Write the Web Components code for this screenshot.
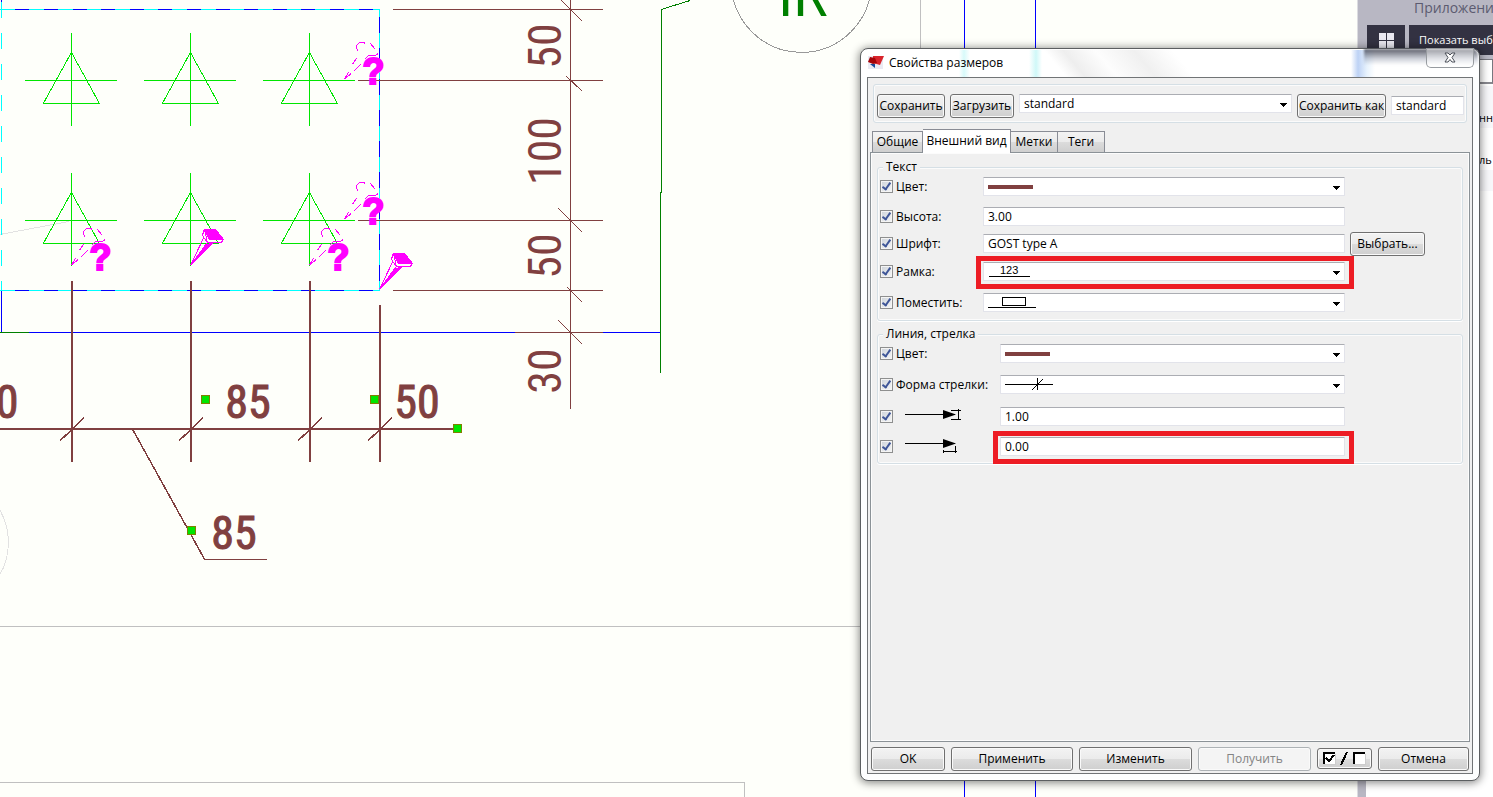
<!DOCTYPE html>
<html lang="ru">
<head>
<meta charset="utf-8">
<title>Свойства размеров</title>
<style>
html, body { height: 100%; margin: 0; }
body { font: 12px/16px "Open Sans", "Noto Sans", sans-serif; color: #000; overflow: hidden; }
</style>
</head>
<body>
<desktop-view>
  <cad-drawing></cad-drawing>
  <side-panel slot="side"></side-panel>
  <dialog-window slot="window" heading="Свойства размеров">
    <settings-bar></settings-bar>
    <tab-sheet>
      <group-box heading="Текст" class="text">
        <prop-row label="Цвет:"><pick-list name="Цвет текста"><svg width="45" height="4"><rect width="45" height="4" fill="#804040"/></svg></pick-list></prop-row>
        <prop-row label="Высота:"><text-field name="Высота" value="3.00"></text-field></prop-row>
        <prop-row label="Шрифт:"><text-field name="Шрифт" value="GOST type A"></text-field><push-button slot="extra">Выбрать...</push-button></prop-row>
        <prop-row label="Рамка:" marked><pick-list name="Рамка"><svg width="44" height="13"><text x="12" y="9" font-size="11" font-family="Liberation Sans">123</text><path d="M1 11.500h41" stroke="#000" shape-rendering="crispEdges"/></svg></pick-list></prop-row>
        <prop-row label="Поместить:"><pick-list name="Поместить"><svg width="50" height="13"><path d="M0 11.500h48M14.500 1.500h23v8h-23z" fill="none" stroke="#000" shape-rendering="crispEdges"/></svg></pick-list></prop-row>
      </group-box>
      <group-box heading="Линия, стрелка" class="line">
        <prop-row label="Цвет:"><pick-list name="Цвет линии"><svg width="45" height="4"><rect width="45" height="4" fill="#804040"/></svg></pick-list></prop-row>
        <prop-row label="Форма стрелки:"><pick-list name="Форма стрелки"><svg width="50" height="13"><path d="M0 6.500h48M32.500 0v12M27 12L38 1" fill="none" stroke="#000" shape-rendering="crispEdges"/></svg></pick-list></prop-row>
        <prop-row name="Высота стрелки"><svg slot="icon" width="60" height="14"><path d="M0 6.500h50M46 2.500h10M46 11.500h10M53.500 1v11" fill="none" stroke="#000" shape-rendering="crispEdges"/><path d="M38 2l13 4.500l-13 4.500z"/></svg><text-field name="Высота стрелки" value="1.00"></text-field></prop-row>
        <prop-row name="Длина стрелки" marked><svg slot="icon" width="60" height="18"><path d="M0 5.500h50M38 13.500h14M38.500 12v3M50.500 8v7" fill="none" stroke="#000" shape-rendering="crispEdges"/><path d="M38 1l13 4.500l-13 4.500z"/></svg><text-field name="Длина стрелки" value="0.00"></text-field></prop-row>
      </group-box>
    </tab-sheet>
    <action-bar></action-bar>
  </dialog-window>
</desktop-view>

<script>
function define(name, html, setup) {
  const template = document.createElement('template');
  template.innerHTML = html;
  customElements.define(name, class extends HTMLElement {
    constructor() {
      super();
      this.attachShadow({ mode: 'open' }).append(template.content.cloneNode(true));
    }
    connectedCallback() { if (setup) setup(this, this.shadowRoot); }
  });
}

define('desktop-view', `
<style>
:host { display: grid; grid-template-columns: minmax(0, 1fr) 136px; height: 100vh; position: relative; overflow: hidden; background: #fefffa; }
::slotted(*) { min-width: 0; min-height: 0; }
</style>
<slot></slot><slot name="side"></slot><slot name="window"></slot>`);

define('push-button', `
<style>
:host { display: flex; height: 24px; }
:host([short]) { height: 21px; }
button { flex: 1; font: inherit; color: inherit; padding: 0; margin: 0; white-space: nowrap; border: 1px solid #707070; border-radius: 3px;
  background: linear-gradient(#f3f3f3, #ebebeb 50%, #dcdcdc 50%, #cfcfcf); box-shadow: inset 0 0 0 1px #fafafa; }
button:disabled { color: #838383; border-color: #adb2b5; background: #f4f4f4; }
</style>
<button type="button"><slot></slot></button>`, (host, root) => {
  const button = root.querySelector('button');
  button.disabled = host.hasAttribute('off');
  if (host.getAttribute('name')) button.setAttribute('aria-label', host.getAttribute('name'));
});

const fieldStyle = `font: inherit; color: inherit; box-sizing: border-box; width: 100%; height: 19px; margin: 0; padding: 0 4px; background: #fff;
  border: 1px solid #e2e3ea; border-top-color: #abadb3; border-radius: 1px; outline: 0;`;

define('text-field', `
<style>:host { display: block; } input { display: block; ${fieldStyle} }</style>
<input type="text">`, (host, root) => {
  const input = root.querySelector('input');
  input.value = host.getAttribute('value');
  input.setAttribute('aria-label', host.getAttribute('name'));
});

define('pick-list', `
<style>
:host { display: grid; align-items: center; }
select { appearance: none; ${fieldStyle} grid-area: 1 / 1; }
.face, .arrow { grid-area: 1 / 1; pointer-events: none; }
.face { padding-left: 5px; display: flex; }
.arrow { justify-self: end; margin: 2px 5px 0 0; }
</style>
<select><option></option></select>
<span class="face"><slot></slot></span>
<svg class="arrow" width="7" height="4" shape-rendering="crispEdges"><path d="M0 0h7v1h-7zM1 1h5v1h-5zM2 2h3v1h-3zM3 3h1v1h-1z"/></svg>`, (host, root) => {
  root.querySelector('select').setAttribute('aria-label', host.getAttribute('name'));
  root.querySelector('option').textContent = host.getAttribute('value') || '';
});

define('group-box', `
<style>
:host { display: block; }
fieldset { margin: 0; padding: 0 0 0 2px; border: 1px solid #d5dfe5; border-radius: 3px; box-shadow: inset 0 0 0 1px #fbfbfb, 0 1px #fff; min-width: 0; }
legend { margin-left: 3px; padding: 0 3px; height: 16px; background: #f0f0f0; }
.rows { display: grid; --label: 103px; margin-top: 2px; grid-template-rows: 30px 27px 28px 31px 27px; }
:host(.line) .rows { --label: 120px; grid-template-rows: 31px 32px 30px 26px; }
</style>
<fieldset><legend></legend><div class="rows"><slot></slot></div></fieldset>`, (host, root) => {
  root.querySelector('legend').textContent = host.getAttribute('heading');
});

define('prop-row', `
<style>
:host { display: grid; grid-template-columns: var(--label) minmax(0, 362fr) 117px; align-items: start; }
label { display: flex; gap: 3px; padding-top: 2px; align-items: start; line-height: 16px; white-space: nowrap; }
input { appearance: none; flex: none; box-sizing: border-box; width: 13px; height: 13px; margin: 1px 0 0; border: 1px solid #8e8f8f; background: linear-gradient(135deg, #cdd3da, #f6f6f6); box-shadow: inset 0 0 0 1px #f4f4f4; display: grid; }
input:checked::before { content: ""; width: 3px; height: 7px; border: solid #3f5698; border-width: 0 2px 2px 0; transform: rotate(35deg); margin: 0 3px; }
.control { position: relative; }
:host([marked]) .control::after { content: ""; position: absolute; inset: -6px -9px -8px -7px; border: 5px solid #ed1c24; pointer-events: none; }
.extra { display: flex; padding-left: 5px; margin-top: -2px; }
::slotted(push-button) { width: 75px; }
::slotted([slot=icon]) { margin: -1px 0 0 9px; }
</style>
<label><input type="checkbox" checked><span></span><slot name="icon"></slot></label>
<div class="control"><slot></slot></div>
<div class="extra"><slot name="extra"></slot></div>`, (host, root) => {
  const label = host.getAttribute('label');
  const span = root.querySelector('span');
  if (label) span.textContent = label;
  else { span.remove(); root.querySelector('input').setAttribute('aria-label', host.getAttribute('name')); }
});

define('settings-bar', `
<style>
:host { display: flex; align-items: start; gap: 5px; margin: 6px 5px 0; padding: 9px 2px 4px 3px; border: 1px solid #d5dfe5; border-radius: 3px; box-shadow: inset 0 0 0 1px #fbfbfb; }
.pick { flex: 1; } .save { width: 68px; } .load { width: 64px; } .as { width: 89px; } .name { width: 73px; margin-top: 2px; }
</style>
<push-button class="save">Сохранить</push-button>
<push-button class="load">Загрузить</push-button>
<pick-list class="pick" name="Набор свойств" value="standard"></pick-list>
<push-button class="as">Сохранить как</push-button>
<text-field class="name" name="Имя набора" value="standard"></text-field>`);

define('tab-sheet', `
<style>
:host { display: flex; flex-direction: column; flex: 1; min-height: 0; margin: 6px 2px 0; }
nav { display: flex; align-items: end; padding-left: 2px; height: 23px; }
button { font: inherit; color: inherit; height: 21px; padding: 0; border: 1px solid #898c95; border-left-width: 0; border-bottom: 0;
  background: linear-gradient(#f3f3f3, #ebebeb 50%, #dcdcdc 50%, #cfcfcf); white-space: nowrap; }
button:first-child { border-left-width: 1px; width: 51px; }
button[aria-selected=true] { height: 24px; width: 88px; margin-bottom: -1px; padding-bottom: 2px; background: #fff; z-index: 1; }
.c, .d { width: 47px; }
.sheet { flex: 1; display: flex; flex-direction: column; gap: 5px; padding: 6px 6px 0; border: 1px solid #8b9297; box-shadow: inset 0 0 0 1px #fcfcfc; }
</style>
<nav role="tablist"><button role="tab">Общие</button><button role="tab" aria-selected="true">Внешний вид</button><button role="tab" class="c">Метки</button><button role="tab" class="d">Теги</button></nav>
<div class="sheet"><slot></slot></div>`);

define('action-bar', `
<style>
:host { display: flex; align-items: start; gap: 6px; padding: 5px 3px 2px; }
.ok { flex: 74 1 0; } .wide { flex: 122 1 0; } .mid { flex: 113 1 0; } .tick { flex: 55 1 0; margin-top: 1px; } .cancel { flex: 91 1 0; }
svg { display: block; margin: auto; }
</style>
<push-button class="ok">OK</push-button>
<push-button class="wide">Применить</push-button>
<push-button class="mid">Изменить</push-button>
<push-button class="mid" off>Получить</push-button>
<push-button class="tick" short name="Включить или выключить все флажки"><svg width="43" height="15" fill="none" shape-rendering="crispEdges"><path fill="#fff" d="M1 2h11v11h-11zM31 2h11v11h-11z"/><path d="M1 13V2h11M31 13V2h11" stroke="#000" stroke-width="2"/><path d="M12.500 3v10.500H1M42.500 3v10.500H31" stroke="#ccc"/><path d="M3 7l3 3l5-6M18 14l6-13" stroke="#000" stroke-width="2"/></svg></push-button>
<push-button class="cancel">Отмена</push-button>`);

define('dialog-window', `
<style>
:host { position: absolute; top: 48px; right: 13px; bottom: 16px; width: 620px; box-sizing: border-box; display: flex; flex-direction: column; padding: 0 6px 6px;
  border: 1px solid #5c5f61; border-radius: 8px; box-shadow: inset 0 0 0 1px #fff, 0 1px 9px 1px #0007;
  background:
    linear-gradient(90deg, #0000 98px, #d7fafa 103px, #0000 109px) top / 100% 28px no-repeat,
    linear-gradient(90deg, #0000 168px, #cff8f8 175px, #0000 181px) top / 100% 28px no-repeat,
    linear-gradient(90deg, #0000 490px, #bdd2f5 497px, #e8f3fd 506px, #fff 514px) top / 100% 28px no-repeat,
    linear-gradient(50deg, #fff 32%, #eee 35%, #fdfdfd 40%, #f0f0f0 46%, #fff 52%) top / 100% 28px no-repeat, #fdfefe; }
header { display: flex; align-items: start; height: 28px; }
header svg.logo { margin: 6px 5px 0 1px; }
h1 { flex: 1; margin: 6px 0 0; font: inherit; line-height: 16px; }
header::after { content: ""; position: absolute; top: 0; right: 1px; width: 114px; height: 16px; border-radius: 0 6px 0 0; background: linear-gradient(#353846cc, #6b759055 60%, #fff0); filter: blur(1px); z-index: 0; }
button { z-index: 1; width: 48px; height: 20px; margin: -1px -1px 0 0; padding: 0; display: grid; place-items: center; background: #fff6; border: 1px solid #979ba0; border-top: 0; border-radius: 0 0 5px 5px; }
main { flex: 1; min-height: 0; display: flex; flex-direction: column; border: 1px solid #717476; background: #f0f0f0; }
</style>
<header>
  <svg class="logo" width="16" height="15"><rect width="15" height="13" y="1" fill="#eaeaf3"/><path d="M5 1h11l-4 9-7-2z" fill="#d8242c"/><path d="M2 2l5 1 2 5-4 1-5-2z" fill="#a50308"/><path d="M2 9l5 0 0 4z" fill="#17499a"/></svg>
  <h1></h1>
  <button type="button" aria-label="Закрыть"><svg width="12" height="11"><path d="M1 1h3l2 2 2-2h3L8 5.500 11 10H8L6 7.500 4 10H1l3-4.500z" fill="#fff" stroke="#4b4f58"/></svg></button>
</header>
<main><slot></slot></main>`, (host, root) => {
  root.querySelector('h1').textContent = host.getAttribute('heading');
});

define('side-panel', `
<style>
:host { display: flex; flex-direction: column; overflow: hidden; white-space: nowrap; background: #fff; border-left: 1px solid #dcdce0; }
header { background: #b8b7c3; height: 59px; box-sizing: border-box; }
h2 { margin: 0; padding: 0 0 0 56px; height: 25px; box-sizing: border-box; font-size: 14px; line-height: 16px; font-weight: 400; color: #5c5b70; }
.bar { display: flex; gap: 4px; padding-left: 9px; }
button { height: 30px; border: 0; background: #333242; color: #fff; font: inherit; font-size: 11px; padding: 0 0 0 10px; display: grid; place-items: center start; flex: 1 1 0; }
.grid { flex: 0 0 38px; padding: 0; place-items: center; }
section { flex: 1; border-left: 8px solid #b8b7c3; }
input { display: block; box-sizing: border-box; width: 100%; height: 25px; border: 1px solid #77777f; border-bottom: 2px solid #88888f; }
ul { margin: 2px 0 0; padding: 0; list-style: none; }
li { height: 42px; padding-left: 113px; font-size: 11px; line-height: 64px; box-sizing: border-box; overflow: hidden; }
li:nth-child(odd) { background: #f7f7fa; }
li:last-child { height: 21px; }
</style>
<header><h2>Приложени</h2><div class="bar">
<button type="button" class="grid" aria-label="Плитка"><svg width="15" height="15" fill="#e9e8f0"><path d="M0 0h7v7H0zM8 0h7v7H8zM0 8h7v7H0zM8 8h7v7H8z"/></svg></button>
<button type="button">Показать выб</button></div></header>
<section><input type="text" aria-label="Поиск"><ul><li>нны</li><li>ль</li><li></li></ul></section>`);

const symbols = [71, 190, 309].flatMap(x => [80, 220].map(y =>
  `M${x - 46} ${y}h92M${x} ${y - 47}V${y + 46}M${x} ${y - 28}L${x - 28} ${y + 23}H${x + 28}Z`)).join('');
const ghosts = [[344, 79], [344, 219], [71, 265], [309, 265]].map(([x, y]) =>
  `<g transform="translate(${x} ${y})"><path d="M0 0l4-7M1-1l6-5M9-8l7-7M8-15l4-6M14-28l-2-3v-3l3-3h4l2 1M26-36l5 6M34-26l-3 2h-7l-4 4" fill="none" stroke="#f0f"/>
  <text x="18" y="5" font-family="Liberation Sans" font-weight="700" font-size="36" fill="#f0f" stroke="#f0f" stroke-width="2">?</text></g>`).join('');
const nails = [[190, 265], [379, 289]].map(([x, y]) =>
  `<g transform="translate(${x} ${y})" stroke="#f0f" fill="none"><path d="M0 0L13-27M0 0L17-23M14-36L12-30L17-23H31L33-26L26-35M14-36l3 13"/><path fill="#f0f" d="M14-36h11l8 10H19zM1-1L16-21L22-22z"/></g>`).join('');
const grips = [[201, 395], [370, 395], [453, 424], [187, 526]].map(([x, y]) => `<rect x="${x}" y="${y}" width="8" height="8"/>`).join('');

define('cad-drawing', `
<style>
:host { display: block; overflow: hidden; }
svg { display: block; width: 100%; height: 100%; }
.dim { font-family: "Roboto Condensed", "Roboto", sans-serif; font-size: 46px; text-anchor: middle; fill: #804040; }
</style>
<svg role="img" aria-label="Чертёж">
<g transform="translate(.4 .4)" fill="none" shape-rendering="crispEdges">
  <path stroke="#e2e2e2" d="M0 234L69 221"/><circle cx="-56" cy="542" r="64" stroke="#e2e2e2"/>
  <path stroke="#c0c0c0" d="M-1 626H1400M-1 782H744V900M920-1V400"/>
  <path stroke="#00f" d="M964-1V2000M1035-1V2000M29 332H660M1 0V9M1 290V332"/>
  <path stroke="#0ff" d="M0 9H379V290H0"/>
  <path stroke="#00f" stroke-dasharray="14 14.6" d="M15 9H379M15 290H379"/>
  <path stroke="#00f" stroke-dasharray="15.5 15.5" d="M379 17V282"/>
  <path stroke="#0ff" stroke-dasharray="15.5 15.5" d="M1 2V290"/>
  <path stroke="#008000" d="M690 0L661 9V192H660V373M0 332H29"/>
  <circle cx="801" cy="-18" r="70" stroke="#999"/>
  <path stroke="#00e600" d="${symbols}"/>
  <path stroke="#804040" d="M393 9H603M358 80H603M358 220H603M393 290H603M515 332H603M570-1V409M560-1L582 21M566 76L582 91M558 208L582 232M567 287L582 302M558 320L582 344M204 559H267"/>
  <g stroke="#804040" stroke-width="2" transform="translate(.5 .5)"><path d="M71 280V461M190 280V461M309 280V461M379 304V461M-1 428H454"/><path stroke-width="1.500" d="M59 440l24-23M178 440l24-23M297 440l24-23M367 440l24-23M132 429L204 559"/></g>
  ${nails}${ghosts}
  <g fill="#00e600" stroke="#808000">${grips}</g>
</g>
<g class="dim" stroke="#804040"><text x="7" y="418">0</text><text x="248" y="418">85</text><text x="417" y="418">50</text><text x="234" y="549">85</text></g>
<g class="dim"><text transform="translate(561 46) rotate(-90)">50</text><text transform="translate(561 151) rotate(-90)">100</text><text transform="translate(561 256) rotate(-90)">50</text><text transform="translate(561 371) rotate(-90)">30</text></g>
<text x="778" y="16" font-family="Roboto" font-size="56" fill="#008000">IR</text>
</svg>`);
</script>
</body>
</html>
